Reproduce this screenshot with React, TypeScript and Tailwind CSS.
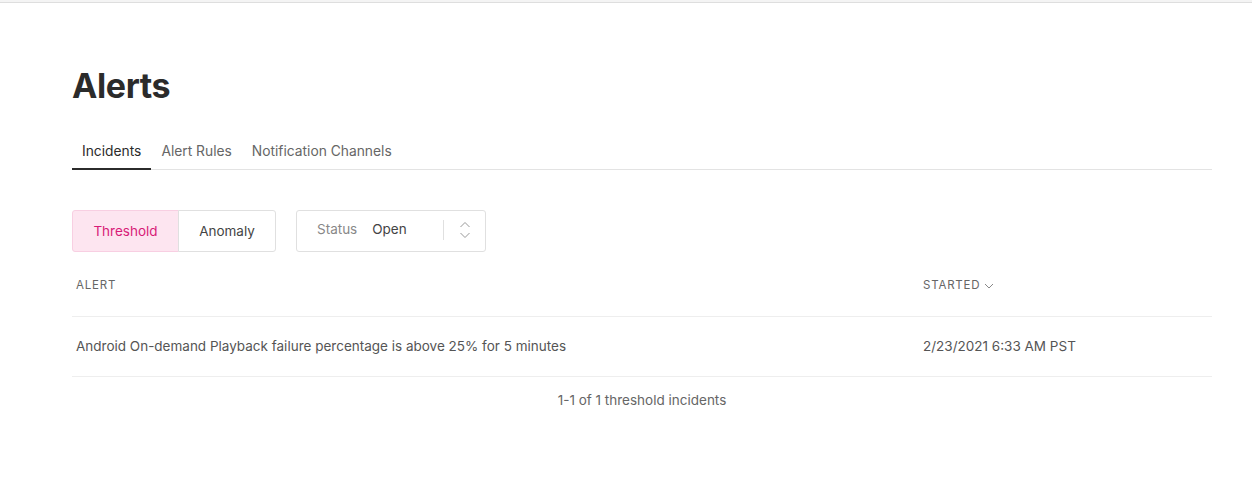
import { useState } from "react";

const tabs = ["Incidents", "Alert Rules", "Notification Channels"];

const App = () => {
  const [tab, setTab] = useState(0);
  const [kind, setKind] = useState<"threshold" | "anomaly">("threshold");

  return (
    <div className="min-h-[496px] bg-white font-['Inter','Liberation_Sans',sans-serif] text-[#555]">
      {/* top strip */}
      <div className="h-[3px] bg-[#f4f4f4] border-b border-[#dedede]" />

      <div className="pl-[72px] pr-[40px]">
        {/* Heading */}
        <h1 className="pt-[59px] text-[34px] font-bold leading-[48px] tracking-[-0.4px] text-[#2b2b2b]">
          Alerts
        </h1>

        {/* Tabs */}
        <div className="mt-[31px] flex border-b border-[#e3e3e3] text-[13.8px]">
          {tabs.map((t, i) => (
            <button
              key={t}
              type="button"
              onClick={() => setTab(i)}
              className={`-mb-px px-[10px] pb-[7px] leading-[20px] ${
                tab === i
                  ? "border-b-2 border-[#2b2b2b] text-[#2b2b2b]"
                  : "border-b-2 border-transparent text-[#666]"
              }`}
            >
              {t}
            </button>
          ))}
        </div>

        {/* Filters */}
        <div className="mt-[40px] flex items-center gap-[20px] text-[13.5px]">
          <div className="flex h-[42px]">
            <button
              type="button"
              onClick={() => setKind("threshold")}
              className={`w-[107px] rounded-l-[3px] border ${
                kind === "threshold"
                  ? "border-[#f8cfe2] bg-[#fde5f0] text-[#d81b78]"
                  : "border-[#e0e0e0] bg-white text-[#444]"
              }`}
            >
              Threshold
            </button>
            <button
              type="button"
              onClick={() => setKind("anomaly")}
              className={`-ml-px w-[98px] rounded-r-[3px] border ${
                kind === "anomaly"
                  ? "border-[#f8cfe2] bg-[#fde5f0] text-[#d81b78]"
                  : "border-[#e0e0e0] bg-white text-[#444]"
              }`}
            >
              Anomaly
            </button>
          </div>

          <div className="flex h-[42px] w-[190px] items-center rounded-[3px] border border-[#e0e0e0] pb-[3px]">
            <span className="pl-[20px] text-[#888]">Status</span>
            <span className="pl-[15px] text-[#444]">Open</span>
            <div className="ml-auto h-[20px] w-px bg-[#e0e0e0]" />
            <div className="flex w-[41px] justify-center">
              <svg width="12" height="20" viewBox="0 0 12 20" fill="none" stroke="#999" strokeWidth="1">
                <path d="M1.5 7 L6 2.5 L10.5 7" />
                <path d="M1.5 13 L6 17.5 L10.5 13" />
              </svg>
            </div>
          </div>
        </div>

        {/* Table */}
        <div className="text-[13.5px]">
          <div className="flex h-[65px] items-center border-b border-[#eee] pt-[4px] text-[11.5px] tracking-[0.8px] text-[#666]">
            <div className="flex-1 pl-[4px]">ALERT</div>
            <div className="flex w-[289px] items-center gap-[4px]">
              STARTED
              <svg width="10" height="6" viewBox="0 0 10 6" fill="none" stroke="#888" strokeWidth="1">
                <path d="M1 1 L5 5 L9 1" />
              </svg>
            </div>
          </div>
          <div className="flex h-[60px] items-center border-b border-[#eee] text-[#555]">
            <div className="flex-1 pl-[4px]">
              Android On-demand Playback failure percentage is above 25% for 5 minutes
            </div>
            <div className="w-[289px]">2/23/2021 6:33 AM PST</div>
          </div>
          <div className="pt-[13px] leading-[20px] text-center text-[#666]">1-1 of 1 threshold incidents</div>
        </div>
      </div>
    </div>
  );
};

export default App;
